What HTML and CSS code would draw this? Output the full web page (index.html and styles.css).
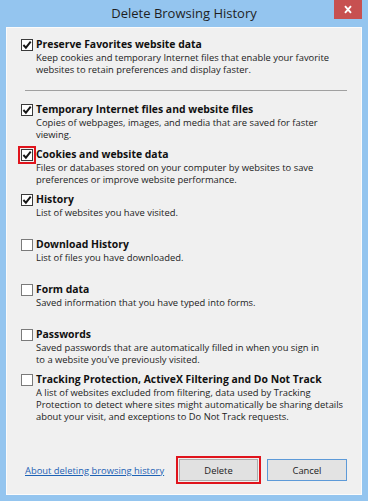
FILE: index.html
```html
<!DOCTYPE html>
<html lang="en">
<head>
<meta charset="utf-8">
<title>Delete Browsing History</title>
<link rel="stylesheet" href="styles.css">
</head>
<body>
<div class="window">
  <div class="titlebar">
    <span class="title">Delete Browsing History</span>
    <button class="close" aria-label="Close">
      <svg width="10" height="9" viewBox="0 0 10 9"><path d="M2 1.2 L8 7.8 M8 1.2 L2 7.8" stroke="#fff" stroke-width="1.9" fill="none"/></svg>
    </button>
  </div>
  <div class="panel">
    <div class="option">
      <div class="head"><span class="box checked"><svg width="10" height="10" viewBox="0 0 10 10"><path d="M1.4 5 L3.9 7.7 L8.7 1.6" stroke="#151515" stroke-width="1.9" fill="none"/></svg></span><span class="label">Preserve Favorites website data</span></div>
      <p class="desc">Keep cookies and temporary Internet files that enable your favorite<br>websites to retain preferences and display faster.</p>
    </div>
    <hr class="sep">
    <div class="option">
      <div class="head"><span class="box checked"><svg width="10" height="10" viewBox="0 0 10 10"><path d="M1.4 5 L3.9 7.7 L8.7 1.6" stroke="#151515" stroke-width="1.9" fill="none"/></svg></span><span class="label">Temporary Internet files and website files</span></div>
      <p class="desc">Copies of webpages, images, and media that are saved for faster<br>viewing.</p>
    </div>
    <div class="option">
      <div class="head"><span class="box checked hl"><svg width="10" height="10" viewBox="0 0 10 10"><path d="M1.4 5 L3.9 7.7 L8.7 1.6" stroke="#151515" stroke-width="1.9" fill="none"/></svg></span><span class="label">Cookies and website data</span></div>
      <p class="desc">Files or databases stored on your computer by websites to save<br>preferences or improve website performance.</p>
    </div>
    <div class="option">
      <div class="head"><span class="box checked"><svg width="10" height="10" viewBox="0 0 10 10"><path d="M1.4 5 L3.9 7.7 L8.7 1.6" stroke="#151515" stroke-width="1.9" fill="none"/></svg></span><span class="label">History</span></div>
      <p class="desc">List of websites you have visited.</p>
    </div>
    <div class="option">
      <div class="head"><span class="box"></span><span class="label">Download History</span></div>
      <p class="desc">List of files you have downloaded.</p>
    </div>
    <div class="option">
      <div class="head"><span class="box"></span><span class="label">Form data</span></div>
      <p class="desc">Saved information that you have typed into forms.</p>
    </div>
    <div class="option">
      <div class="head"><span class="box"></span><span class="label">Passwords</span></div>
      <p class="desc">Saved passwords that are automatically filled in when you sign in<br>to a website you've previously visited.</p>
    </div>
    <div class="option">
      <div class="head"><span class="box"></span><span class="label">Tracking Protection, ActiveX Filtering and Do Not Track</span></div>
      <p class="desc">A list of websites excluded from filtering, data used by Tracking<br>Protection to detect where sites might automatically be sharing details<br>about your visit, and exceptions to Do Not Track requests.</p>
    </div>
    <div class="footer">
      <a class="help" href="#">About deleting browsing history</a>
      <div class="buttons">
        <button class="btn hl-btn">Delete</button>
        <button class="btn default">Cancel</button>
      </div>
    </div>
  </div>
</div>
</body>
</html>
```
FILE: styles.css
```css
* { box-sizing: border-box; }
html, body { margin: 0; padding: 0; }
body {
  width: 368px;
  height: 501px;
  overflow: hidden;
  background: #94c5ef;
  font-family: "Open Sans", "Noto Sans", sans-serif;
  color: #1c1c1c;
}
.window {
  display: flex;
  flex-direction: column;
  height: 501px;
}
.titlebar {
  height: 27px;
  display: grid;
  grid-template-columns: 1fr auto 1fr;
  align-items: start;
}
.title {
  grid-column: 2;
  font-size: 13px;
  line-height: 26px;
  color: #1f1f1f;
  white-space: nowrap;
}
.close {
  grid-column: 3;
  justify-self: end;
  margin-right: 6px;
  width: 28px;
  height: 19px;
  padding: 0;
  border: 0;
  background: #c75050;
  display: flex;
  align-items: center;
  justify-content: center;
}
.panel {
  flex: 1;
  margin: 0 6px 6px;
  background: #f0f0f0;
  border: 1px solid #fbfbfb;
  padding: 10px 14px 13px;
  display: flex;
  flex-direction: column;
}
.option { height: 45px; flex: none; }
.head {
  display: flex;
  align-items: center;
  gap: 3px;
  height: 13px;
}
.box {
  flex: none;
  width: 12px;
  height: 12px;
  border: 1px solid #7a7a7a;
  background: #fff;
  display: flex;
  align-items: center;
  justify-content: center;
}
.box.checked { border-color: #3a3a3a; }
.box.hl { outline: 2px solid #e0141c; outline-offset: 1px; }
.label {
  font-weight: 700;
  font-size: 10.4px;
  line-height: 13px;
  white-space: nowrap;
  color: #111;
}
.desc {
  margin: 1px 0 0 15px;
  font-size: 9.4px;
  line-height: 12px;
  white-space: nowrap;
}
.sep {
  flex: none;
  margin: 7px 0 12px 4px;
  border: 0;
  height: 1px;
  background: #a0a0a0;
}
.footer {
  margin-top: auto;
  display: flex;
  align-items: center;
  justify-content: space-between;
}
.help {
  margin-left: 4px;
  font-size: 9.4px;
  color: #1d62b5;
  text-decoration: underline;
}
.buttons { display: flex; gap: 9px; }
.btn {
  height: 22px;
  width: 80px;
  padding: 0;
  font-family: inherit;
  font-size: 9.4px;
  color: #1c1c1c;
  background: #e1e1e1;
  border: 1px solid #adadad;
}
.btn.hl-btn { width: 79px; outline: 2px solid #e0141c; outline-offset: 1px; }
.btn.default { border-color: #5d9ad8; background: #e3e3e3; }
```
